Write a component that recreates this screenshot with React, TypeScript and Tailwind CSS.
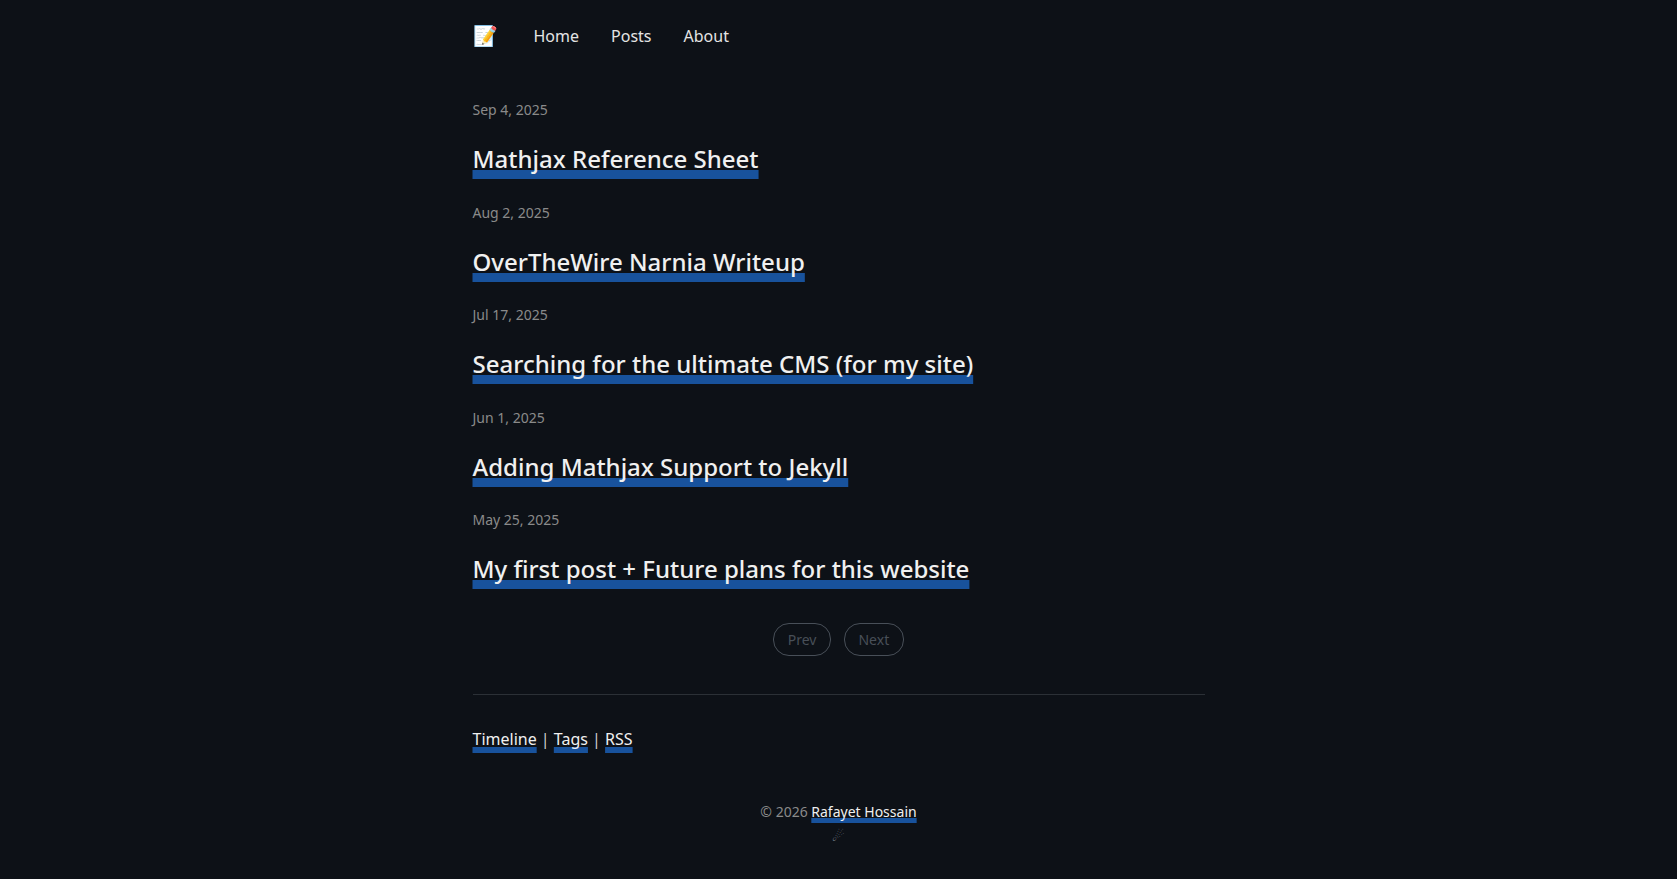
import React from 'react'

const posts = [
  { date: 'Sep 4, 2025', title: 'Mathjax Reference Sheet' },
  { date: 'Aug 2, 2025', title: 'OverTheWire Narnia Writeup' },
  { date: 'Jul 17, 2025', title: 'Searching for the ultimate CMS (for my site)' },
  { date: 'Jun 1, 2025', title: 'Adding Mathjax Support to Jekyll' },
  { date: 'May 25, 2025', title: 'My first post + Future plans for this website' },
]

const link = 'underline decoration-[#18529c] [text-decoration-skip-ink:none] text-[#f0f0f0]'

export default function App() {
  return (
    <div className="min-h-[879px] bg-[#0d1117] font-['Noto_Sans',sans-serif] text-[#f0f0f0] antialiased">
      <div className="mx-auto w-[732px]">
        <nav className="flex h-[72px] items-center text-base text-[#e4e4e4]">
          <span className="w-[25px] text-[20px] leading-none">📝</span>
          <div className="ml-[36px] flex gap-8">
            <span>Home</span>
            <span>Posts</span>
            <span>About</span>
          </div>
        </nav>

        <main className="pt-[27px]">
          {posts.map(p => (
            <article key={p.title} className="mb-[23.600px]">
              <div className="text-sm leading-[22px] text-[#8a8a8a]">{p.date}</div>
              <h2 className="mt-[19px] text-2xl leading-[38px] font-medium">
                <a className={`${link} decoration-[9px] underline-offset-[2px]`}>{p.title}</a>
              </h2>
            </article>
          ))}
        </main>

        <div className="mt-[34.500px] flex justify-center gap-[13px] text-sm">
          <span className="rounded-[16px] border border-[#484f58] px-[13.500px] py-[5px] leading-[21px] text-[#484f58]">Prev</span>
          <span className="rounded-[16px] border border-[#484f58] px-[13.500px] py-[5px] leading-[21px] text-[#484f58]">Next</span>
        </div>

        <hr className="mt-[38px] border-[#2b3036]" />

        <div className="mt-[31px] text-base leading-[26px] text-[#d0d0d0]">
          <a className={`${link} decoration-[6px] underline-offset-[2px]`}>Timeline</a> | <a className={`${link} decoration-[6px] underline-offset-[2px]`}>Tags</a> | <a className={`${link} decoration-[6px] underline-offset-[2px]`}>RSS</a>
        </div>

        <footer className="mt-[49px] flex flex-col items-center text-sm text-[#8a8a8a]">
          <div className="leading-[22px]">
            © 2026 <a className={`${link} decoration-[5px] underline-offset-[1px]`}>Rafayet Hossain</a>
          </div>
          <div className="mt-[2px] text-sm leading-[22px] text-[#6e7681]">☄</div>
        </footer>
      </div>
    </div>
  )
}
